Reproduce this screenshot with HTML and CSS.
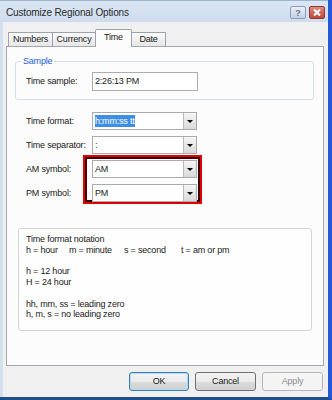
FILE: index.html
```html
<!DOCTYPE html>
<html>
<head>
<meta charset="utf-8">
<link rel="stylesheet" href="styles.css">
</head>
<body>
<div class="win">
  <div class="titlebar">
    <span class="title">Customize Regional Options</span>
    <div class="caption-btns">
      <span class="cbtn help">?</span>
      <span class="cbtn close"><svg width="14" height="11" viewBox="0 0 14 11"><path d="M4 2.5 L10 8.5 M10 2.5 L4 8.5" stroke="#fff" stroke-width="2" fill="none"/></svg></span>
    </div>
  </div>
  <div class="client">
    <div class="tabs">
      <span class="tab t-num">Numbers</span><span class="tab t-cur">Currency</span><span class="tab t-time active">Time</span><span class="tab t-date">Date</span>
    </div>
    <div class="panel">
      <fieldset class="group">
        <legend>Sample</legend>
        <div class="srow"><span class="lbl">Time sample:</span><div class="textbox">2:26:13 PM</div></div>
      </fieldset>
      <div class="fields">
        <span class="lbl r1">Time format:</span>
        <div class="combo r1"><span class="val"><span class="sel">h:mm:ss tt</span></span><span class="drop"></span></div>
        <span class="lbl r2">Time separator:</span>
        <div class="combo r2"><span class="val">:</span><span class="drop"></span></div>
        <div class="hl"></div>
        <span class="lbl r3">AM symbol:</span>
        <div class="combo r3"><span class="val">AM</span><span class="drop"></span></div>
        <span class="lbl r4">PM symbol:</span>
        <div class="combo r4"><span class="val">PM</span><span class="drop"></span></div>
      </div>
      <div class="notation">
        <div>Time format notation</div>
        <div class="cols"><span class="c1">h = hour</span><span class="c2">m = minute</span><span class="c3">s = second</span><span>t = am or pm</span></div>
        <div class="blank"></div>
        <div>h = 12 hour</div>
        <div>H = 24 hour</div>
        <div class="blank"></div>
        <div>hh, mm, ss = leading zero</div>
        <div>h, m, s = no leading zero</div>
      </div>
    </div>
    <div class="buttons">
      <span class="btn ok">OK</span>
      <span class="btn">Cancel</span>
      <span class="btn disabled">Apply</span>
    </div>
  </div>
</div>
</body>
</html>
```
FILE: styles.css
```css
* { box-sizing: border-box; }
body {
  margin: 0;
  width: 332px;
  height: 400px;
  overflow: hidden;
  background: #f0f0f0;
  font-family: "Liberation Sans", Arial, sans-serif;
  font-size: 9px;
  letter-spacing: -0.2px;
  color: #1a1a1a;
}
.win {
  height: 400px;
  display: flex;
  flex-direction: column;
  border-right: 4px solid #2358d8;
  border-bottom: 3px solid #1f4f8a;
}
.titlebar {
  height: 22px;
  flex: none;
  display: flex;
  align-items: center;
  justify-content: space-between;
  padding: 0 3px 0 6px;
  background: linear-gradient(#dbe6f3, #cddcee);
  border-top: 1px solid #9fb4cf;
}
.title {
  font-size: 10px;
  letter-spacing: -0.15px;
  color: #2a2a2a;
  margin-top: 2px;
}
.caption-btns { display: flex; gap: 3px; margin-top: 2px; }
.cbtn {
  width: 16px;
  height: 13px;
  border-radius: 2px;
  display: flex;
  align-items: center;
  justify-content: center;
}
.help {
  background: linear-gradient(#e8eef6, #c3d1e3);
  border: 1px solid #8b9db6;
  color: #6a7484;
  font-weight: bold;
  font-size: 9px;
}
.close {
  background: linear-gradient(#e08a80, #c0443a);
  border: 1px solid #8e3a32;
}
.client {
  flex: 1;
  padding: 7px 4px 0 3px;
  border-left: 3px solid #d3e0ee;
  display: flex;
  flex-direction: column;
}
.tabs {
  display: flex;
  align-items: flex-end;
  height: 17px;
  margin-left: 2px;
}
.tab {
  height: 14px;
  border: 1px solid #9aa3ab;
  border-bottom: none;
  background: linear-gradient(#fbfbfb, #e6e6e6);
  text-align: center;
  line-height: 13px;
  margin-right: -1px;
}
.t-num { width: 45px; }
.t-cur { width: 44px; }
.t-time { width: 37px; }
.t-date { width: 35px; }
.tab.active {
  height: 18px;
  margin-bottom: -1px;
  background: #fcfcfc;
  position: relative;
  z-index: 1;
  line-height: 15px;
  border-radius: 2px 2px 0 0;
}
.panel {
  height: 320px;
  border: 1px solid #a2a7ad;
  background: #fcfcfc;
  display: flex;
  flex-direction: column;
}
.group {
  margin: 9px 9px 0 8px;
  padding: 5px 0 8px 10px;
  border: 1px solid #d5dfe5;
  border-radius: 3px;
  min-width: 0;
}
.group legend {
  color: #1b5fd6;
  line-height: 11px;
  padding: 0 2px;
  margin-left: -5px;
}
.srow { display: flex; align-items: center; }
.lbl { line-height: 11px; white-space: nowrap; }
.srow .lbl { width: 66px; }
.textbox {
  width: 106px;
  height: 19px;
  border: 1px solid #abadb3;
  background: #fff;
  line-height: 17px;
  padding-left: 2px;
}
.fields {
  margin: 12px 0 0 19px;
  display: grid;
  grid-template-columns: 66px 105px;
  grid-auto-rows: 18px;
  row-gap: 6px;
  align-items: center;
}
.r1 { grid-row: 1; }
.r2 { grid-row: 2; }
.r3 { grid-row: 3; }
.r4 { grid-row: 4; }
.fields .lbl { grid-column: 1; }
.combo {
  grid-column: 2;
  height: 18px;
  border: 1px solid #a9abb0;
  background: #fff;
  display: flex;
  position: relative;
  z-index: 1;
}
.val {
  flex: 1;
  line-height: 16px;
  padding-left: 2px;
}
.sel {
  background: #3d8ee6;
  color: #fff;
  padding: 1px 0;
}
.drop {
  width: 13px;
  background: linear-gradient(#f6f6f6, #d9d9d9);
  border-left: 1px solid #b8b8b8;
  display: flex;
  align-items: center;
  justify-content: center;
}
.drop::after {
  content: "";
  border-left: 3px solid transparent;
  border-right: 3px solid transparent;
  border-top: 3px solid #000;
}
.hl {
  grid-column: 2;
  grid-row: 3 / 5;
  align-self: stretch;
  margin: -5px -5px -2px -9px;
  border: 2px solid #e00000;
  box-shadow: inset 0 0 0 2px #3a0000;
}
.notation {
  margin: 26px 11px 0 11px;
  height: 103px;
  border: 1px solid #d5d5d5;
  border-radius: 3px;
  padding: 5px 7px;
  background: #fefefe;
  line-height: 10.75px;
}
.blank { height: 10.75px; }
.cols { white-space: nowrap; }
.c1, .c2, .c3 { display: inline-block; }
.c1 { width: 43px; }
.c2 { width: 55px; }
.c3 { width: 57px; }
.buttons {
  display: flex;
  justify-content: flex-end;
  gap: 6px;
  margin: 6px 1px 0 0;
}
.btn {
  width: 61px;
  height: 19px;
  border: 1px solid #707070;
  border-radius: 3px;
  background: linear-gradient(#f3f3f3 0, #ebebeb 50%, #dddddd 50%, #cfcfcf 100%);
  text-align: center;
  line-height: 17px;
}
.btn.ok {
  width: 60px;
  border-color: #3c7fb1;
  box-shadow: inset 0 0 0 1px #a8dcf8;
}
.btn.disabled {
  border-color: #b5b8bb;
  background: #f4f4f4;
  color: #8d8d8d;
}
```
